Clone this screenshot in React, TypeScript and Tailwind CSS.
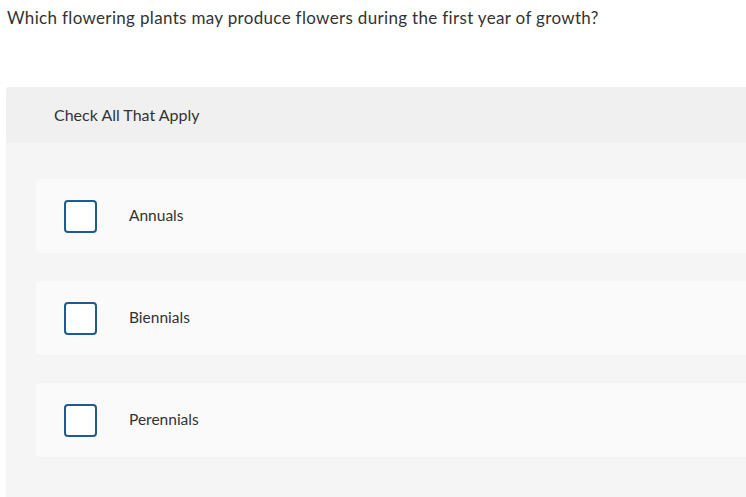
import React from "react";

const options = ["Annuals", "Biennials", "Perennials"];

export default function App() {
  return (
    <div className="w-[746px] h-[497px] overflow-hidden bg-white text-[#333333]" style={{ fontFamily: "Lato, 'Open Sans', sans-serif" }}>
      <div className="pl-[7px] pt-[7px] text-[17px] leading-[22px] tracking-[0.33px]">
        Which flowering plants may produce flowers during the first year of growth?
      </div>
      <div className="ml-[6px] mt-[58px] w-[800px] rounded-tl-[3px] bg-[#f5f5f5] pb-[40px]">
        <div className="h-[56px] flex items-center pl-[48px] bg-[#f0f0f0] rounded-tl-[3px] text-[16px]">
          Check All That Apply
        </div>
        <div className="pl-[30px] pt-[36px] flex flex-col gap-[28px]">
          {options.map((o) => (
            <div key={o} className="h-[74px] flex items-center bg-[#fafafa] rounded-l-[3px] pl-[28px]">
              <div className="w-[33px] h-[33px] border-2 border-[#1f5a93] rounded-[4px] bg-white shrink-0" />
              <span className="ml-[32px] text-[15.5px]">{o}</span>
            </div>
          ))}
        </div>
      </div>
    </div>
  );
}
